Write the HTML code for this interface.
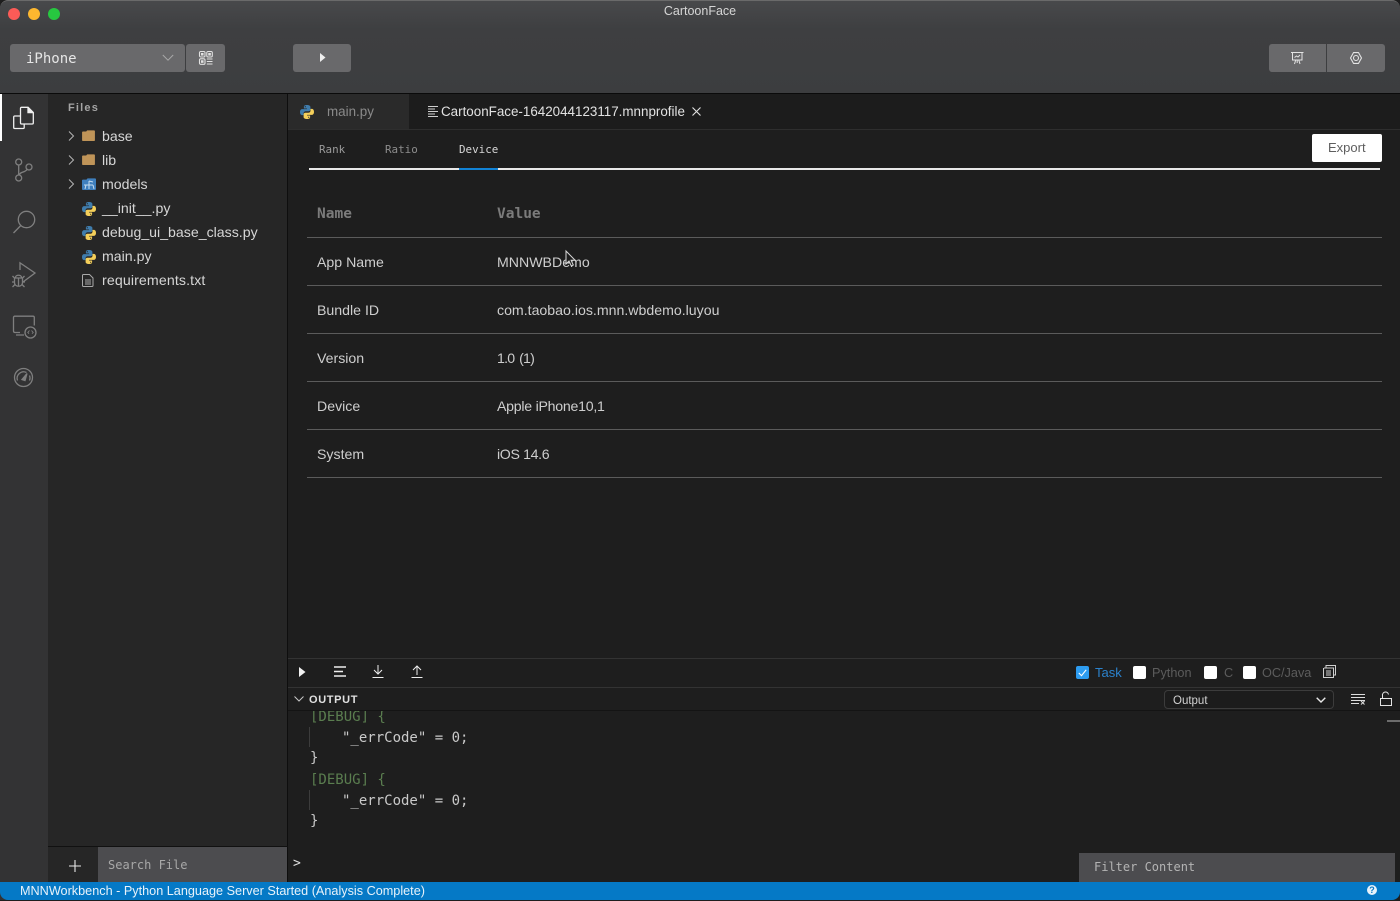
<!DOCTYPE html>
<html><head><meta charset="utf-8"><title>CartoonFace</title>
<style>
html,body{margin:0;padding:0;background:#1e1e1e;}
body{position:relative;width:1400px;height:900px;overflow:hidden;font-family:"Liberation Sans",sans-serif;}
div{position:absolute;box-sizing:border-box;}
svg{position:absolute;overflow:visible;}
.t{white-space:nowrap;line-height:20px;height:20px;}
.m{font-family:"DejaVu Sans Mono","Liberation Mono",monospace;}
.f{color:#d6d6d6;font-size:14.15px;left:102px;}
.l{height:1px;background:#5b5b5b;left:307px;width:1075px;}
.c{color:#cecece;font-size:14.15px;}
.b{background:#69696b;border-radius:3px;}
.cb{width:13px;height:13px;background:#fff;border-radius:2px;top:666px;}
.cl{color:#5c5c5c;font-size:12.7px;top:663px;}
.ic{fill:none;stroke:#7f7f7f;stroke-width:1.3;}
</style></head><body>
<svg width="0" height="0" style="position:absolute"><defs>
<symbol id="py" viewBox="0 0 16 16">
<path fill="#3f7cac" d="M7.900 1C5 1 4.900 2.200 4.900 3v1.500H8v.6H3.200C1.800 5.100 1 6.300 1 8.100c0 1.900.9 3 2.200 3h1.300V9.300c0-1.100 1-2.100 2.200-2.100h3c1 0 1.700-.8 1.700-1.700V3c0-1.100-1-2-3.500-2zM6.300 2.100a.6.600 0 1 1 0 1.200.6.600 0 0 1 0-1.200z"/>
<path fill="#f4cf5a" d="M8.100 15c2.900 0 3-1.200 3-2v-1.500H8v-.6h4.800c1.400 0 2.200-1.200 2.200-3 0-1.900-.9-3-2.200-3h-1.300v1.800c0 1.100-1 2.100-2.200 2.100h-3c-1 0-1.700.8-1.700 1.700V13c0 1.100 1 2 3.500 2zm1.600-1.100a.6.600 0 1 1 0-1.200.6.600 0 0 1 0 1.200z"/>
</symbol>
<symbol id="folder" viewBox="0 0 14 12"><path fill="#bf9458" d="M0 2.500C0 2 .4 1.600 1 1.600h3.500l1-1.200H13c.6 0 1 .4 1 1V11c0 .6-.4 1-1 1H1c-.6 0-1-.4-1-1z"/></symbol>
<symbol id="chev" viewBox="0 0 8 12"><path d="M2 1.500l4.500 4.500L2 10.500" fill="none" stroke="#b5b5b5" stroke-width="1"/></symbol>
</defs></svg>

<!-- Title + toolbar -->
<div style="left:0;top:0;width:1400px;height:94px;background:linear-gradient(#48494b 0,#3e3f41 28px,#3c3d3f 94px);border-radius:8px 8px 0 0;border-top:1px solid #6a6a6a;"></div>
<div style="left:0;top:93px;width:1400px;height:1px;background:#0a0a0a;"></div>
<div style="left:8px;top:8px;width:12px;height:12px;border-radius:50%;background:#fc5b57;"></div>
<div style="left:28px;top:8px;width:12px;height:12px;border-radius:50%;background:#fdb72f;"></div>
<div style="left:48px;top:8px;width:12px;height:12px;border-radius:50%;background:#27c840;"></div>
<div class="t" style="left:0;width:1400px;text-align:center;top:1px;color:#d6d6d6;font-size:12.5px;">CartoonFace</div>

<div class="b" style="left:10px;top:44px;width:175px;height:28px;"></div>
<div class="t m" style="left:26px;top:49px;color:#e6e6e6;font-size:14px;">iPhone</div>
<svg style="left:162px;top:54px" width="12" height="8"><path d="M.8 1l5.200 5.200L11.200 1" fill="none" stroke="#a8a8a8" stroke-width="1"/></svg>
<div class="b" style="left:186px;top:44px;width:39px;height:28px;"></div>
<svg style="left:199px;top:51px" width="14" height="14" fill="none" stroke="#e2e2e2" stroke-width="1.100"><rect x=".5" y=".5" width="5.500" height="5.500" rx="1.200"/><rect x="7.800" y=".5" width="5.500" height="5.500" rx="1.200"/><rect x=".5" y="7.800" width="5.500" height="5.500" rx="1.200"/><path d="M7.800 8h5.700M7.800 10.500h5.700M7.800 13h5.700"/><rect x="2.500" y="2.500" width="1.500" height="1.500" fill="#e2e2e2"/><rect x="9.800" y="2.500" width="1.500" height="1.500" fill="#e2e2e2"/><rect x="2.500" y="9.800" width="1.500" height="1.500" fill="#e2e2e2"/></svg>
<div class="b" style="left:293px;top:44px;width:58px;height:28px;"></div>
<svg style="left:320px;top:53px" width="6" height="9"><path d="M0 0l5.500 4.500L0 9z" fill="#eee"/></svg>
<div class="b" style="left:1269px;top:44px;width:57px;height:28px;border-radius:3px 0 0 3px;"></div>
<div class="b" style="left:1327px;top:44px;width:58px;height:28px;border-radius:0 3px 3px 0;"></div>
<svg style="left:1291px;top:52px" width="13" height="13" fill="none" stroke="#e4e4e4" stroke-width="1"><path d="M0 .5h12.500M1.500.5v7.500h9.500V.5M3.500 12l1.200-4M9 12L7.800 8M6.200 8v3M3.500 5.500l2-1.500 1.500 1 2-2"/></svg>
<svg style="left:1350px;top:52px" width="12" height="12" fill="none" stroke="#e4e4e4" stroke-width="1.100"><path d="M3.500.6h5L11.500 6l-3 5.400h-5L.5 6z" stroke-linejoin="round"/><circle cx="6" cy="6" r="2.500"/></svg>

<!-- Activity bar -->
<div style="left:0;top:94px;width:48px;height:806px;background:#333334;"></div>
<div style="left:0;top:94px;width:2px;height:47px;background:#fff;"></div>
<svg style="left:13px;top:106px" width="22" height="24" fill="none" stroke="#efefef" stroke-width="1.300"><path d="M7 10H1.800C1 10 .7 10.400.7 11v10.500c0 .7.400 1 1 1h8.500c.7 0 1-.3 1-1V18"/><path d="M7.500 2.500c0-.8.400-1.200 1.100-1.200h6.500l5.200 5.200v10.400c0 .8-.4 1.100-1.100 1.100H8.600c-.7 0-1.100-.3-1.100-1.100z" /><path d="M15 1.300v5.300h5.300" fill="#efefef"/></svg>
<svg class="ic" style="left:14px;top:158px" width="22" height="26" stroke-width="1.500"><circle cx="4.700" cy="4" r="3"/><circle cx="4.700" cy="20" r="3"/><circle cx="15" cy="9" r="3"/><path d="M4.700 7v10M13 11.500C10.500 15 6 13.500 5.500 17"/></svg>
<svg class="ic" style="left:12px;top:209.500px" width="24" height="25" stroke-width="1.400"><circle cx="14.500" cy="9.500" r="8.200"/><path d="M8.800 15.500L1.500 23"/></svg>
<svg class="ic" style="left:12px;top:262px" width="25" height="26" stroke-width="1.400"><path d="M8 8V.8L23 11 11 20"/><path d="M3.500 15.500c0-3 6-3 6 0M2.500 16h8v4.500c0 5-8 5-8 0zM6.500 16v8M.5 14l2.500 2.500M12.500 14L10 16.500M0 20h2.500M10.500 20H13M.5 25l2.500-2.500M12.500 25L10 22.500"/></svg>
<svg class="ic" style="left:12px;top:315px" width="25" height="24" stroke-width="1.400"><path d="M8 17.500H3c-1 0-1.500-.5-1.500-1.500V2.500c0-.8.500-1.300 1.300-1.300H21c.8 0 1.300.5 1.300 1.300v8M4 20h8"/><circle cx="18.500" cy="17.500" r="5.500"/><path d="M17.500 15.500L15.800 17.500l1.200 1.200M19.500 15.500l1.700 2-1.200 1.200" stroke-width=".9"/></svg>
<svg class="ic" style="left:13px;top:367px" width="21" height="21" stroke-width="1.500"><circle cx="10.500" cy="10.500" r="9"/><path d="M4.500 13.500a6.500 6.500 0 0 1 9-8M16.500 8.500a6.500 6.500 0 0 1 0 5"/><path d="M9 12.500l5-6-2 7z" fill="#7f7f7f"/></svg>

<!-- Sidebar -->
<div style="left:48px;top:94px;width:240px;height:788px;background:#262626;"></div>
<div style="left:287px;top:94px;width:1px;height:788px;background:#0e0e0e;"></div>
<div class="t" style="left:68px;top:98px;color:#a4a4a4;font-size:11px;font-weight:bold;letter-spacing:1.200px;">Files</div>

<svg style="left:67px;top:130px" width="8" height="12"><use href="#chev"/></svg>
<svg style="left:82px;top:130px" width="13" height="11"><use href="#folder"/></svg>
<div class="t f" style="top:126px;">base</div>
<svg style="left:67px;top:154px" width="8" height="12"><use href="#chev"/></svg>
<svg style="left:82px;top:154px" width="13" height="11"><use href="#folder"/></svg>
<div class="t f" style="top:150px;">lib</div>
<svg style="left:67px;top:178px" width="8" height="12"><use href="#chev"/></svg>
<svg style="left:82px;top:178px" width="14" height="12"><path fill="#3f7fbd" d="M0 2.500C0 2 .4 1.600 1 1.600h3.500l1-1.200H13c.6 0 1 .4 1 1V11c0 .6-.4 1-1 1H1c-.6 0-1-.4-1-1z"/><path d="M2 7h9M7 3v8M4 7l-1 4M11 7l1 4M7 3l4 1" stroke="#c6dcef" fill="none" stroke-width="1"/></svg>
<div class="t f" style="top:174px;">models</div>
<svg style="left:80.500px;top:200.500px" width="16" height="16"><use href="#py"/></svg>
<div class="t f" style="top:198px;">__init__.py</div>
<svg style="left:80.500px;top:224.500px" width="16" height="16"><use href="#py"/></svg>
<div class="t f" style="top:222px;">debug_ui_base_class.py</div>
<svg style="left:80.500px;top:248.500px" width="16" height="16"><use href="#py"/></svg>
<div class="t f" style="top:246px;">main.py</div>
<svg style="left:82px;top:274px" width="12" height="13" fill="none" stroke="#a9a9a9" stroke-width="1"><path d="M.5 1.500c0-.6.400-1 1-1h6l3.500 3.500v7.500c0 .6-.4 1-1 1h-8.500c-.6 0-1-.4-1-1zM3 6h6M3 8h6M3 10h6"/></svg>
<div class="t f" style="top:270px;letter-spacing:.13px;">requirements.txt</div>

<div style="left:48px;top:846px;width:240px;height:1px;background:#111;"></div>
<svg style="left:69px;top:860px" width="12" height="12"><path d="M6 0v12M0 6h12" stroke="#e8e8e8" stroke-width="1.100"/></svg>
<div style="left:98px;top:847px;width:189px;height:35px;background:#4c4c4f;"></div>
<div class="t m" style="left:108px;top:855px;color:#a8a8a8;font-size:12px;">Search File</div>

<!-- Tabs -->
<div style="left:288px;top:94px;width:1112px;height:36px;background:#1c1c1c;"></div>
<div style="left:288px;top:94px;width:121px;height:35px;background:#2a2a2a;"></div>
<div style="left:288px;top:129px;width:1112px;height:1px;background:#2e2e2e;"></div>
<svg style="left:299px;top:104px" width="16" height="16"><use href="#py"/></svg>
<div class="t" style="left:327px;top:102px;color:#8a8a8a;font-size:13.4px;">main.py</div>
<svg style="left:428px;top:106px" width="11" height="12" stroke="#cfcfcf" stroke-width="1"><path d="M0 .5h10M0 3h7M0 5.500h10M0 8h7M0 10.500h10"/></svg>
<div class="t" style="left:441px;top:102px;color:#e2e2e2;font-size:13.4px;">CartoonFace-1642044123117.mnnprofile</div>
<svg style="left:692px;top:107px" width="9" height="9"><path d="M.5.500l8 8M8.500.500l-8 8" stroke="#e2e2e2" stroke-width="1.100"/></svg>

<!-- Sub tabs -->
<div class="t m" style="left:319px;top:140px;color:#9a9a9a;font-size:10.900px;">Rank</div>
<div class="t m" style="left:385px;top:140px;color:#8d8d8d;font-size:10.900px;">Ratio</div>
<div class="t m" style="left:459px;top:140px;color:#d6d6d6;font-size:10.900px;">Device</div>
<div style="left:309px;top:168px;width:1071px;height:2px;background:#e8e8e8;"></div>
<div style="left:459px;top:168px;width:39px;height:2px;background:#1283d6;"></div>
<div style="left:1312px;top:134px;width:70px;height:28px;background:#fff;border-radius:2px;"></div>
<div class="t" style="left:1328px;top:138px;color:#5e5e5e;font-size:13px;">Export</div>

<!-- Table -->
<div class="t m" style="left:317px;top:204px;color:#7b7b7b;font-size:14.500px;font-weight:bold;">Name</div>
<div class="t m" style="left:497px;top:204px;color:#7b7b7b;font-size:14.500px;font-weight:bold;">Value</div>
<div class="l" style="top:237px;"></div>
<div class="t c" style="left:317px;top:252px;">App Name</div>
<div class="t c" style="left:497px;top:252px;">MNNWBDemo</div>
<div class="l" style="top:285px;"></div>
<div class="t c" style="left:317px;top:300px;">Bundle ID</div>
<div class="t c" style="left:497px;top:300px;">com.taobao.ios.mnn.wbdemo.luyou</div>
<div class="l" style="top:333px;"></div>
<div class="t c" style="left:317px;top:348px;">Version</div>
<div class="t c" style="left:497px;top:348px;letter-spacing:-.75px;word-spacing:1.500px;">1.0 (1)</div>
<div class="l" style="top:381px;"></div>
<div class="t c" style="left:317px;top:396px;">Device</div>
<div class="t c" style="left:497px;top:396px;letter-spacing:-.25px;">Apple iPhone10,1</div>
<div class="l" style="top:429px;"></div>
<div class="t c" style="left:317px;top:444px;">System</div>
<div class="t c" style="left:497px;top:444px;letter-spacing:-.35px;">iOS 14.6</div>
<div class="l" style="top:477px;"></div>
<svg style="left:565px;top:250px" width="12" height="18"><path d="M1 1v13l3-3 2.300 5 2-1-2.200-4.700h4z" fill="#1e1e1e" stroke="#d8d8d8" stroke-width="1"/></svg>

<!-- Log toolbar -->
<div style="left:288px;top:658px;width:1112px;height:1px;background:#333;"></div>
<div style="left:288px;top:687px;width:1112px;height:1px;background:#333;"></div>
<svg style="left:299px;top:667px" width="7" height="10"><path d="M0 0l6.500 5L0 10z" fill="#f2f2f2"/></svg>
<svg style="left:334px;top:666px" width="12" height="11" stroke="#eee" stroke-width="1.400"><path d="M0 1h12M0 5.500h9M0 10h12"/></svg>
<svg style="left:372px;top:665px" width="12" height="13" fill="none" stroke="#eee" stroke-width="1"><path d="M6 0v8.500M2 5l4 4 4-4M.5 12.500h11"/></svg>
<svg style="left:411px;top:665px" width="12" height="13" fill="none" stroke="#eee" stroke-width="1"><path d="M6 10V1.500M2 5l4-4 4 4M.5 12.500h11"/></svg>
<div style="left:1076px;top:666px;width:13px;height:13px;background:#2d9cf0;border-radius:2px;"></div>
<svg style="left:1078px;top:669px" width="9" height="8"><path d="M.8 4l2.700 2.700L8.200.8" fill="none" stroke="#fff" stroke-width="1.100"/></svg>
<div class="t" style="left:1095px;top:663px;color:#2b82cc;font-size:13px;">Task</div>
<div class="cb" style="left:1133px;"></div>
<div class="t cl" style="left:1152px;">Python</div>
<div class="cb" style="left:1204px;"></div>
<div class="t cl" style="left:1224px;">C</div>
<div class="cb" style="left:1243px;"></div>
<div class="t cl" style="left:1262px;">OC/Java</div>
<svg style="left:1323px;top:665px" width="13" height="13" fill="none" stroke="#cfcfcf" stroke-width="1"><path d="M3 2.500V.5h9.500v9.500H10.500M1 3h9.500v9.500H.5V3M3 6h5M3 8h5M3 10h5"/></svg>

<!-- Output panel -->
<svg style="left:294px;top:696px" width="10" height="6"><path d="M.5.500L5 5 9.500.500" fill="none" stroke="#c8c8c8" stroke-width="1"/></svg>
<div class="t" style="left:309px;top:690px;color:#e0e0e0;font-size:11px;font-weight:bold;letter-spacing:.65px;">OUTPUT</div>
<div style="left:1164px;top:690px;width:170px;height:19px;border:1px solid #3c3c3c;border-radius:4px;background:#1c1c1c;"></div>
<div class="t" style="left:1173px;top:691px;color:#d2d2d2;font-size:11.500px;">Output</div>
<svg style="left:1316px;top:697px" width="10" height="6"><path d="M.7.700L5 5 9.300.700" fill="none" stroke="#e8e8e8" stroke-width="1.400"/></svg>
<svg style="left:1351px;top:694px" width="15" height="11" stroke="#dcdcdc" stroke-width="1" fill="none"><path d="M0 .5h14M0 3.500h14M0 6.500h14M0 9.500h8M10 7l3.500 3.500M13.500 7L10 10.500"/></svg>
<svg style="left:1380px;top:692px" width="12" height="14" fill="none" stroke="#e4e4e4" stroke-width="1"><rect x=".5" y="6.500" width="11" height="7"/><path d="M2.500 6.500V3.500a3 3 0 0 1 6-1"/></svg>

<div style="left:288px;top:710px;width:1112px;height:1px;background:#141414;"></div>
<div class="t m" style="left:310px;top:707px;color:#5a7d4f;font-size:14px;clip-path:inset(4px 0 0 0);">[DEBUG] {</div>
<div style="left:309px;top:727px;width:1px;height:20px;background:#3c3c3c;"></div>
<div class="t m" style="left:342px;top:728px;color:#c9c9c9;font-size:14px;">"_errCode" = 0;</div>
<div class="t m" style="left:310px;top:748px;color:#c9c9c9;font-size:14px;">}</div>
<div class="t m" style="left:310px;top:770px;color:#5a7d4f;font-size:14px;">[DEBUG] {</div>
<div style="left:309px;top:790px;width:1px;height:20px;background:#3c3c3c;"></div>
<div class="t m" style="left:342px;top:791px;color:#c9c9c9;font-size:14px;">"_errCode" = 0;</div>
<div class="t m" style="left:310px;top:811px;color:#c9c9c9;font-size:14px;">}</div>
<div style="left:1387px;top:720px;width:13px;height:2px;background:#6c6c6c;"></div>

<div class="t m" style="left:293px;top:854px;color:#dedede;font-size:13px;">&gt;</div>
<div style="left:1079px;top:853px;width:316px;height:29px;background:#4c4c4f;"></div>
<div class="t m" style="left:1094px;top:857px;color:#b4b4b4;font-size:12px;">Filter Content</div>

<!-- Status bar -->
<div style="left:0;top:882px;width:1400px;height:18px;background:#0579c6;border-radius:0 0 8px 8px;"></div>
<div class="t" style="left:20px;top:881px;color:#e8f2fa;font-size:12.660px;">MNNWorkbench - Python Language Server Started (Analysis Complete)</div>
<div style="left:1367px;top:885px;width:10px;height:10px;border-radius:50%;background:#e8f2fa;"></div>
<div class="t" style="left:1367px;top:880px;width:10px;text-align:center;color:#0579c6;font-size:9px;font-weight:bold;">?</div>
</body></html>
